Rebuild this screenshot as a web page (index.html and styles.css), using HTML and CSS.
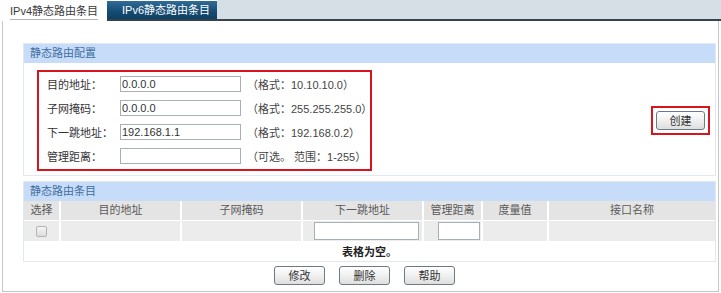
FILE: index.html
```html
<!DOCTYPE html>
<html lang="zh">
<head>
<meta charset="utf-8">
<title>静态路由</title>
<link rel="stylesheet" href="styles.css">
</head>
<body>
<div class="tabs">
  <div class="tab tab-on"><span>IPv4静态路由条目</span></div>
  <div class="tab tab-off">IPv6静态路由条目</div>
  <div class="tab-fill"></div>
</div>
<div class="content">
  <section class="panel cfg">
    <div class="panel-hd">静态路由配置</div>
    <div class="cfg-body">
      <div class="mark form">
        <div class="row"><label>目的地址：</label><input class="txt" type="text" value="0.0.0.0"><span class="hint">（格式：10.10.10.0）</span></div>
        <div class="row"><label>子网掩码：</label><input class="txt" type="text" value="0.0.0.0"><span class="hint">（格式：255.255.255.0）</span></div>
        <div class="row"><label>下一跳地址：</label><input class="txt" type="text" value="192.168.1.1"><span class="hint">（格式：192.168.0.2）</span></div>
        <div class="row"><label>管理距离：</label><input class="txt" type="text" value=""><span class="hint">（可选。 范围：1-255）</span></div>
      </div>
      <div class="mark mark-btn"><button class="btn btn-create">创建</button></div>
    </div>
  </section>
  <section class="panel list">
    <div class="panel-hd">静态路由条目</div>
    <div class="grid">
      <div class="th">选择</div>
      <div class="th">目的地址</div>
      <div class="th">子网掩码</div>
      <div class="th">下一跳地址</div>
      <div class="th">管理距离</div>
      <div class="th">度量值</div>
      <div class="th last">接口名称</div>
      <div class="td"><span class="chk"></span></div>
      <div class="td"></div>
      <div class="td"></div>
      <div class="td"><input class="cell-in wide" type="text"></div>
      <div class="td"><input class="cell-in narrow" type="text"></div>
      <div class="td"></div>
      <div class="td last"></div>
      <div class="empty">表格为空。</div>
    </div>
  </section>
  <div class="actions">
    <button class="btn">修改</button>
    <button class="btn">删除</button>
    <button class="btn">帮助</button>
  </div>
</div>
</body>
</html>
```
FILE: styles.css
```css
* { box-sizing: border-box; }
html, body { margin: 0; padding: 0; background: #fff; }
body {
  width: 721px;
  height: 293px;
  overflow: hidden;
  font-family: "Liberation Sans", "Noto Sans CJK SC", sans-serif;
  font-size: 11px;
  color: #333;
  text-spacing-trim: space-all;
  font-feature-settings: "chws" 0, "halt" 0, "palt" 0;
}
.tabs {
  display: flex;
  height: 21px;
}
.tab { white-space: nowrap; }
.tab-on {
  width: 107px;
  padding: 0 0 0 10px;
  background: #fff;
}
.tab-on span {
  display: inline-block;
  height: 20px;
  line-height: 22px;
  border-bottom: 1px solid #b3b3b3;
  color: #3a3a3a;
  width: 88px;
}
.tab-off {
  width: 110px;
  margin-top: 1px;
  height: 20px;
  line-height: 18px;
  padding-left: 15px;
  color: #fff;
  background: linear-gradient(#2f6c97, #144b73 60%, #0f3f62);
  border-bottom: 2px solid #33414c;
}
.tab-fill {
  flex: 1;
  background: #d6dee6;
  border-bottom: 2px solid #37444f;
}
.content {
  margin: 0 2px;
  height: 271px;
  border: 1px solid #c6c6c6;
  border-top: none;
  padding-top: 22px;
}
.panel {
  margin: 0 2px 0 20px;
  border: 1px solid #e2e8ef;
}
.panel-hd {
  height: 19px;
  line-height: 19px;
  padding-left: 6px;
  background: #c6dcf8;
  color: #3f6d9f;
}
.cfg-body {
  display: flex;
  align-items: center;
  justify-content: space-between;
  padding: 7px 5px 4px 13px;
}
.mark {
  border: 2px solid #d8141f;
}
.form {
  width: 335px;
  padding-bottom: 1px;
}
.row {
  display: flex;
  align-items: center;
  height: 24px;
  padding-left: 8px;
  white-space: nowrap;
}
.row label {
  width: 73px;
  flex-shrink: 0;
  color: #333;
}
.txt {
  flex-shrink: 0;
  width: 121px;
  height: 16px;
  border: 1px solid #a7afb7;
  padding: 0 1px;
  margin: 0;
  font-family: "Liberation Sans", sans-serif;
  font-size: 11px;
  color: #333;
  background: #fff;
}
.hint {
  margin-left: 6px;
  color: #444;
}
.mark-btn {
  padding: 3px;
  display: flex;
}
.btn {
  width: 51px;
  height: 19px;
  padding: 0;
  border: 1px solid #6d7a86;
  border-radius: 3px;
  background: linear-gradient(#ffffff, #f0f0f0 50%, #dedede);
  font-family: "Noto Sans CJK SC", sans-serif;
  font-size: 11px;
  line-height: 17px;
  color: #333;
}
.btn-create { width: 49px; }
.list {
  margin-top: 5px;
}
.grid {
  display: grid;
  grid-template-columns: 37px 121px 121px 121px 59px 66px 1fr;
}
.th, .td {
  border-right: 2px solid #fff;
  border-bottom: 1px solid #fff;
  text-align: center;
  color: #5a5a5a;
}
.th.last, .td.last { border-right: none; }
.th {
  height: 20px;
  line-height: 19px;
  background: #e4e4e4;
}
.td {
  height: 21px;
  background: #ececec;
  display: flex;
  align-items: center;
  justify-content: center;
}
.chk {
  width: 11px;
  height: 11px;
  border: 1px solid #b4b4b4;
  border-radius: 2px;
  background: linear-gradient(#f4f4f4, #dedede);
}
.cell-in {
  height: 18px;
  border: 1px solid #a7afb7;
  margin: 0;
  padding: 0;
  background: #fff;
}
.cell-in.wide { width: 105px; margin-left: 8px; }
.cell-in.narrow { width: 42px; margin-left: 12px; }
.empty {
  grid-column: 1 / -1;
  height: 19px;
  line-height: 19px;
  text-align: center;
  font-weight: bold;
  color: #222;
  font-family: "Noto Sans CJK SC", sans-serif;
}
.actions {
  display: flex;
  justify-content: center;
  gap: 14px;
  margin-top: 4px;
  padding-left: 8px;
}
```
